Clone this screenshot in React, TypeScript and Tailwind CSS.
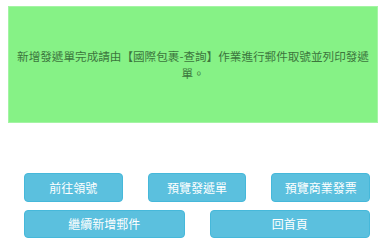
const topButtons = ["前往領號", "預覽發遞單", "預覽商業發票"]
const bottomButtons = ["繼續新增郵件", "回首頁"]

function InfoButton({ label }: { label: string }) {
  return (
    <button
      type="button"
      className="flex items-center justify-center rounded-[4px] border border-[#46b8da] bg-[#5bc0de] text-[12px] text-white"
    >
      {label}
    </button>
  )
}

export default function App() {
  return (
    <div
      className="min-h-screen bg-white pt-[6px]"
      style={{ fontFamily: '"Noto Sans CJK TC", "Noto Sans", sans-serif' }}
    >
      {/* Success message */}
      <div className="ml-[8px] flex h-[117px] w-[370px] items-center justify-center border border-[#a4f4a4] bg-[#86f286] px-[7px] text-center text-[11.6px] leading-[17px] text-[#3c763d]">
        新增發遞單完成請由【國際包裹-查詢】作業進行郵件取號並列印發遞單。
      </div>

      {/* Actions */}
      <div className="ml-[24px] mt-[50px] flex w-[346px] flex-col gap-[8px]">
        <div className="grid h-[29px] grid-cols-3 gap-x-[25px]">
          {topButtons.map((label) => (
            <InfoButton key={label} label={label} />
          ))}
        </div>
        <div className="grid h-[28px] grid-cols-2 gap-x-[25px]">
          {bottomButtons.map((label) => (
            <InfoButton key={label} label={label} />
          ))}
        </div>
      </div>
    </div>
  )
}
